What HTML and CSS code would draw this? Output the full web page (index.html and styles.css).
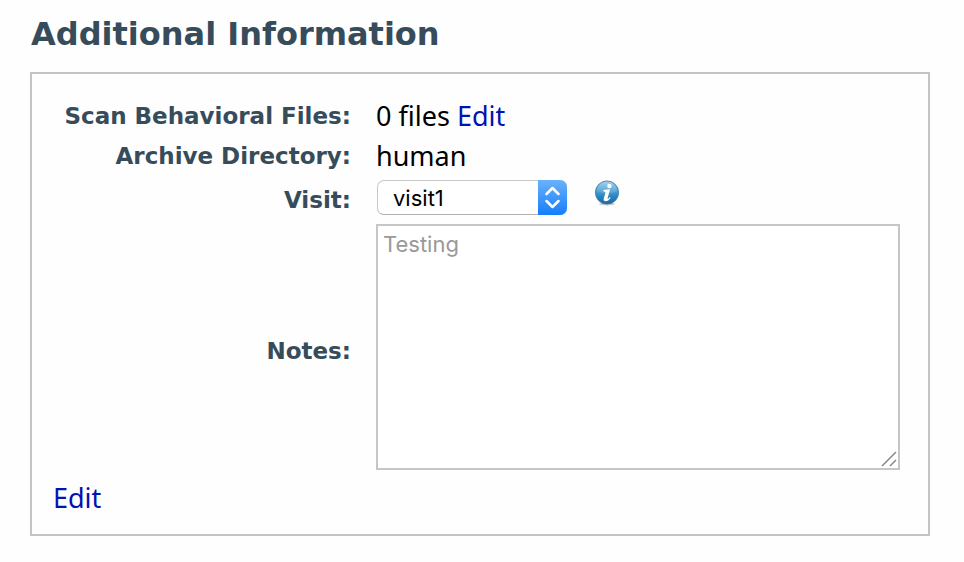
FILE: index.html
```
<!DOCTYPE html>
<html lang="en">
<head>
  <meta charset="utf-8">
  <title>Additional Information</title>
  <link rel="stylesheet" href="styles.css">
</head>
<body>

  <h1>Additional Information</h1>

  <form class="info-panel">
    <div class="fields">
      <span class="label">Scan Behavioral Files:</span>
      <div class="value">0 files <a href="#files">Edit</a></div>

      <span class="label">Archive Directory:</span>
      <div class="value">human</div>

      <label class="label" for="visit">Visit:</label>
      <div class="visit-row">
        <div class="select-wrapper">
          <select id="visit">
            <option>visit1</option>
          </select>
          <svg class="select-arrows" viewBox="0 0 29 34" aria-hidden="true">
            <path d="M8.5 13.5l6-6 6 6M8.5 20.5l6 6 6-6" fill="none" stroke="#fff" stroke-width="2.5" stroke-linecap="round" stroke-linejoin="round"/>
          </svg>
        </div>
        <svg class="info-icon" viewBox="0 0 26 28" role="img" aria-label="Visit information">
          <defs>
            <linearGradient id="ball" x1="0" y1="0" x2="0" y2="1">
              <stop offset="0" stop-color="#9ccbea"/>
              <stop offset=".4" stop-color="#4fa2d4"/>
              <stop offset=".65" stop-color="#2a88c5"/>
              <stop offset="1" stop-color="#1f659c"/>
            </linearGradient>
          </defs>
          <ellipse cx="13" cy="24" rx="8" ry="1.4" fill="#777" opacity=".4"/>
          <circle cx="13" cy="12.5" r="11.6" fill="url(#ball)" stroke="#3479ab" stroke-width=".8"/>
          <path d="M3 11.5a10 10 0 0 1 20 0q-10 4-20 0z" fill="#fff" opacity=".13"/>
          <circle cx="15.4" cy="6" r="2.2" fill="#fff"/>
          <path d="M9.4 10l6.7-.8-2.4 8.5q-.4 1.5.5 1 .8-.5 1.6-1.6l.8.6q-2.2 3.6-5 3.6-2.6-.1-1.8-3.1l1.6-5.3q.4-1.4-2-1.4z" fill="#fff"/>
        </svg>
      </div>

      <label class="label" for="notes">Notes:</label>
      <div class="notes-wrapper">
        <textarea id="notes" placeholder="Testing"></textarea>
        <svg class="grip" viewBox="0 0 16 16" aria-hidden="true">
          <path d="M1 15L15 1M9 15l6-6" fill="none" stroke="#888" stroke-width="1.5"/>
        </svg>
      </div>
    </div>
    <a class="edit-link" href="#edit">Edit</a>
  </form>

</body>
</html>
```

FILE: styles.css
```
body {
  margin: 0;
  padding: 14px 34px 26px 31px;
  background-color: #fefefe;
  font-family: "Noto Sans", sans-serif;
  font-size: 27px;
  line-height: 40px;
  color: #000;
}
h1 {
  margin: 0 0 18px;
  color: #374c5b;
  font-family: "DejaVu Sans", sans-serif;
  font-size: 32px;
  line-height: 40px;
}
a {
  color: #0013b3;
  text-decoration: none;
}
.info-panel {
  margin-left: -1px;
  padding: 22px 28px 16px 21px;
  border: 2px solid #c3c3c8;
}
.fields {
  display: grid;
  grid-template-columns: 298px 1fr;
  column-gap: 25px;
  align-items: center;
}
.label {
  color: #374c5b;
  font-family: "DejaVu Sans", sans-serif;
  font-size: 23px;
  font-weight: bold;
  text-align: right;
  white-space: nowrap;
}
.visit-row {
  display: flex;
  align-items: flex-start;
  gap: 27px;
  padding: 4px 0 9px 1px;
}
.select-wrapper {
  position: relative;
  width: 190px;
  height: 35px;
}
select {
  display: block;
  width: 100%;
  height: 100%;
  padding: 0 40px 0 15px;
  appearance: none;
  border: 1px solid #c8c8c8;
  border-bottom-color: #b0b0b0;
  border-radius: 7px;
  background-color: #fff;
  color: #000;
  font-family: Inter, sans-serif;
  font-size: 22px;
}
.select-arrows {
  position: absolute;
  top: 0;
  right: 0;
  width: 29px;
  height: 100%;
  border-radius: 0 7px 7px 0;
  background: linear-gradient(#6bb1fa, #157efb);
  pointer-events: none;
}
.info-icon {
  width: 26px;
  height: 28px;
}
.notes-wrapper {
  position: relative;
  padding-bottom: 8px;
}
textarea {
  display: block;
  box-sizing: border-box;
  width: 100%;
  height: 246px;
  padding: 4px 5px;
  border: 2px solid #c6c6c6;
  background-color: #fff;
  font-family: Inter, sans-serif;
  font-size: 22px;
  line-height: 28px;
  resize: none;
}
textarea::placeholder {
  color: #999;
}
.grip {
  position: absolute;
  right: 3px;
  bottom: 11px;
  width: 16px;
  height: 16px;
}
.edit-link {
  display: inline-block;
}
```
